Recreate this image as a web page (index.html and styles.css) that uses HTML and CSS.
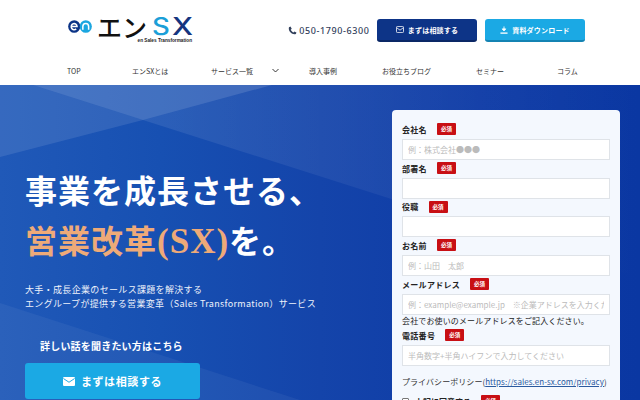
FILE: index.html
```html
<!DOCTYPE html>
<html lang="ja">
<head>
<meta charset="utf-8">
<title>エンSX</title>
<link rel="stylesheet" href="styles.css">
</head>
<body>
<header class="header">
  <div class="top">
    <a class="logo">
      <svg class="logo-mark" width="24" height="13" viewBox="0 0 27 14" preserveAspectRatio="none">
        <circle cx="7" cy="7" r="6.8" fill="#0b3386"/>
        <circle cx="20" cy="7" r="6.8" fill="#1ba6e0"/>
        <path d="M3.6 7h6.6a3.3 3.3 0 1 0-1 2.6" fill="none" stroke="#fff" stroke-width="1.7"/>
        <path d="M16.7 10.4V7a3.2 3.2 0 0 1 6.500 0v3.400" fill="none" stroke="#fff" stroke-width="1.700"/>
      </svg>
      <span class="logo-words">
        <span class="logo-main"><span class="logo-en">エン</span><span class="logo-s">S</span><span class="logo-x">X</span></span>
        <span class="logo-sub">en Sales Transformation</span>
      </span>
    </a>
    <div class="actions">
      <span class="phone">
        <svg width="9" height="9" viewBox="0 0 24 24"><path d="M6.600 1.500 2.500 3C1 9 3.500 14 7 17.500S15 23 21 21.500l1.500-4.100-5.500-3-2.500 2.600c-3-1.200-6-4.200-7.200-7.200L10 7.200z" fill="#33415c"/></svg>
        050-1790-6300
      </span>
      <a class="btn btn-navy">
        <svg width="8" height="7" viewBox="0 0 18 16"><rect x="1" y="1" width="16" height="14" rx="2" fill="none" stroke="#fff" stroke-width="1.800"/><path d="M1.500 4 9 9.500 16.500 4" fill="none" stroke="#fff" stroke-width="1.800"/></svg>
        まずは相談する
      </a>
      <a class="btn btn-sky">
        <svg width="8" height="8" viewBox="0 0 18 18"><path d="M9 1v9M5 6.500 9 11l4-4.500z" fill="#fff" stroke="#fff" stroke-width="2"/><path d="M1 16h16" stroke="#fff" stroke-width="3"/></svg>
        資料ダウンロード
      </a>
    </div>
  </div>
  <nav class="nav">
    <a class="nav-top">TOP</a>
    <a class="nav-about">エンSXとは</a>
    <a class="nav-service">サービス一覧</a>
    <svg class="chev" width="7" height="5" viewBox="0 0 14 10"><path d="M1 2l6 6 6-6" fill="none" stroke="#222" stroke-width="1.800"/></svg>
    <a class="nav-case">導入事例</a>
    <a class="nav-blog">お役立ちブログ</a>
    <a class="nav-seminar">セミナー</a>
    <a class="nav-column">コラム</a>
  </nav>
</header>
<main class="hero">
  <svg class="hero-bg" width="640" height="315" viewBox="0 0 640 315">
    <defs>
      <linearGradient id="fade" x1="0" y1="0" x2="1" y2="0">
        <stop offset="0" stop-color="#fff" stop-opacity=".09"/>
        <stop offset=".5" stop-color="#fff" stop-opacity=".05"/>
        <stop offset="1" stop-color="#fff" stop-opacity="0"/>
      </linearGradient>
    </defs>
    <polygon points="33,0 272,0 143,35" fill="#fff" opacity=".19"/>
    <polygon points="0,0 33,0 143,35 0,72" fill="#fff" opacity=".1"/>
    <polygon points="272,0 640,0 640,193 143,35" fill="url(#fade)"/>
    <polygon points="0,218 300,315 0,315" fill="#fff" opacity=".05"/>
  </svg>
  <div class="hero-left">
    <h1 class="title">事業を成長させる、<br><span class="accent">営業改革<span class="sx">(SX)</span></span>を。</h1>
    <p class="lead">大手・成長企業のセールス課題を解決する<br>エングループが提供する営業変革（Sales Transformation）サービス</p>
    <p class="cta-label">詳しい話を聞きたい方はこちら</p>
    <a class="cta">
      <svg width="12" height="9" viewBox="0 0 16 12"><rect width="16" height="12" rx="1.500" fill="#fff"/><path d="M0.500 2 8 7l7.500-5" fill="none" stroke="#1ba9e4" stroke-width="1.300"/></svg>
      まずは相談する
    </a>
  </div>
  <form class="card">
    <div class="field"><label class="label">会社名<span class="req">必須</span></label><div class="input ph"><span class="ph-text">例：株式会社●●●</span></div></div>
    <div class="field"><label class="label">部署名<span class="req">必須</span></label><div class="input"></div></div>
    <div class="field field-short"><label class="label">役職<span class="req">必須</span></label><div class="input"></div></div>
    <div class="field"><label class="label">お名前<span class="req">必須</span></label><div class="input ph"><span class="ph-text">例：山田　太郎</span></div></div>
    <div class="field"><label class="label">メールアドレス<span class="req">必須</span></label><div class="input ph"><span class="ph-text">例：example@example.jp　※企業アドレスを入力ください</span></div></div>
    <p class="note">会社でお使いのメールアドレスをご記入ください。</p>
    <div class="field"><label class="label">電話番号<span class="req">必須</span></label><div class="input ph"><span class="ph-text">半角数字+半角ハイフンで入力してください</span></div></div>
    <p class="privacy">プライバシーポリシー(<a class="privacy-link">https://sales.en-sx.com/privacy</a>)</p>
    <label class="agree"><span class="check"></span>上記に同意する<span class="req">必須</span></label>
  </form>
</main>
</body>
</html>
```
FILE: styles.css
```css
* { box-sizing: border-box; }
html, body { margin: 0; height: 400px; overflow: hidden; }
body { font-family: "Noto Sans CJK JP", "Noto Sans", sans-serif; color: #222; background: #fff; }
p, h1 { margin: 0; }

.header { height: 85px; display: flex; flex-direction: column; background: #fff; }
.top { height: 55px; display: flex; justify-content: space-between; padding: 15px 55px 0 68px; }
.logo { display: flex; align-items: flex-start; gap: 5px; }
.logo-mark { margin-top: 5px; }
.logo-words { display: flex; flex-direction: column; align-items: flex-end; }
.logo-main { display: flex; height: 23px; align-items: center; font-size: 25px; line-height: 23px; font-weight: 500; }
.logo-en { color: #111; margin-right: 5px; white-space: nowrap; }
.logo-s, .logo-x { display: inline-block; font-family: Inter, sans-serif; font-weight: 500; font-size: 24px; transform-origin: left center; }
.logo-s { width: 20px; color: #1b9fd8; transform: scaleX(1.15); }
.logo-x { width: 20px; color: #15357f; transform: scaleX(1.25); }
.logo-sub { font-family: "Liberation Sans", sans-serif; font-size: 4.700px; line-height: 5px; font-weight: 700; color: #222; white-space: nowrap; }

.actions { display: flex; align-items: flex-start; margin-top: 4px; }
.phone { display: flex; align-items: center; gap: 2px; height: 22px; font-family: "Noto Sans", sans-serif; font-size: 9px; font-weight: 500; letter-spacing: .6px; color: #33415c; margin-right: 7.500px; }
.btn { display: flex; align-items: center; justify-content: center; gap: 4px; height: 23px; border-radius: 3px; color: #fff; font-size: 7px; font-weight: 700; letter-spacing: .2px; }
.btn-navy { width: 100px; background: #0d3487; border-bottom: 2px solid #0a2765; margin-right: 8px; }
.btn-sky { width: 100px; background: #1ba9e4; border-bottom: 2px solid #1483b3; }

.nav { height: 30px; padding-top: 1px; display: flex; align-items: center; font-size: 7px; color: #333; padding-left: 67px; }
.nav-top { width: 65px; }
.nav-about { width: 79px; }
.nav-service { width: 61px; }
.chev { margin-right: 30px; }
.nav-case { width: 73px; }
.nav-blog { width: 94px; }
.nav-seminar { width: 81px; }

.hero { position: relative; height: 315px; display: flex; justify-content: space-between; padding: 25px 20px 0 25px; overflow: hidden; background: linear-gradient(90deg, #2059b8 0%, #1750b2 25%, #1444aa 50%, #0e3ba6 75%, #0a37a2 100%); }
.hero-bg { position: absolute; left: 0; top: 0; }
.hero-left { position: relative; width: 340px; color: #fff; }
.title { margin-top: 57px; font-family: "Liberation Serif", "Noto Sans CJK JP", serif; font-size: 32px; line-height: 50px; font-weight: 700; letter-spacing: 1px; }
.accent { color: #eeaa78; }
.sx { font-size: 35px; }
.lead { margin-top: 16px; font-size: 9px; line-height: 14px; letter-spacing: .33px; color: #eef2fb; }
.cta-label { margin: 27px 0 0 15px; font-size: 10px; line-height: 16px; font-weight: 700; letter-spacing: .2px; }
.cta { display: flex; align-items: center; justify-content: center; gap: 6px; width: 175px; height: 36px; margin-top: 9px; background: #1ba9e4; border-radius: 3px; font-size: 11px; font-weight: 700; letter-spacing: .6px; color: #fff; }

.card { position: relative; width: 228px; height: 320px; padding: 11px 10px 0; background: #f4f8fe; border-radius: 4px; }
.label { display: flex; align-items: center; gap: 10px; height: 18px; padding-bottom: 2px; font-size: 8px; font-weight: 700; letter-spacing: .3px; color: #222; }
.field-short .label { height: 17px; }
.req { display: inline-flex; align-items: center; justify-content: center; width: 19px; height: 12px; background: #c80f14; color: #fff; font-size: 5.500px; font-weight: 700; letter-spacing: 0; border-radius: 1px; }
.input { height: 21px; background: #fff; border: 1px solid #dfe3e8; display: flex; align-items: center; padding: 0 5px 0 5px; font-size: 8px; }
.ph { color: #bbb; }
.ph-text { min-width: 0; overflow: hidden; white-space: nowrap; }
.note { font-size: 8px; line-height: 12px; letter-spacing: .13px; color: #222; }
.privacy { margin-top: 10px; font-size: 8px; line-height: 12px; letter-spacing: .06px; color: #333; white-space: nowrap; }
.privacy-link { color: #2a5a9f; text-decoration: underline; }
.agree { display: flex; align-items: center; gap: 6px; margin-top: 7px; font-size: 8px; font-weight: 700; }
.agree .req { margin-left: 4px; }
.check { width: 7px; height: 7px; background: #fff; border: 1px solid #777; border-radius: 1px; }
```
